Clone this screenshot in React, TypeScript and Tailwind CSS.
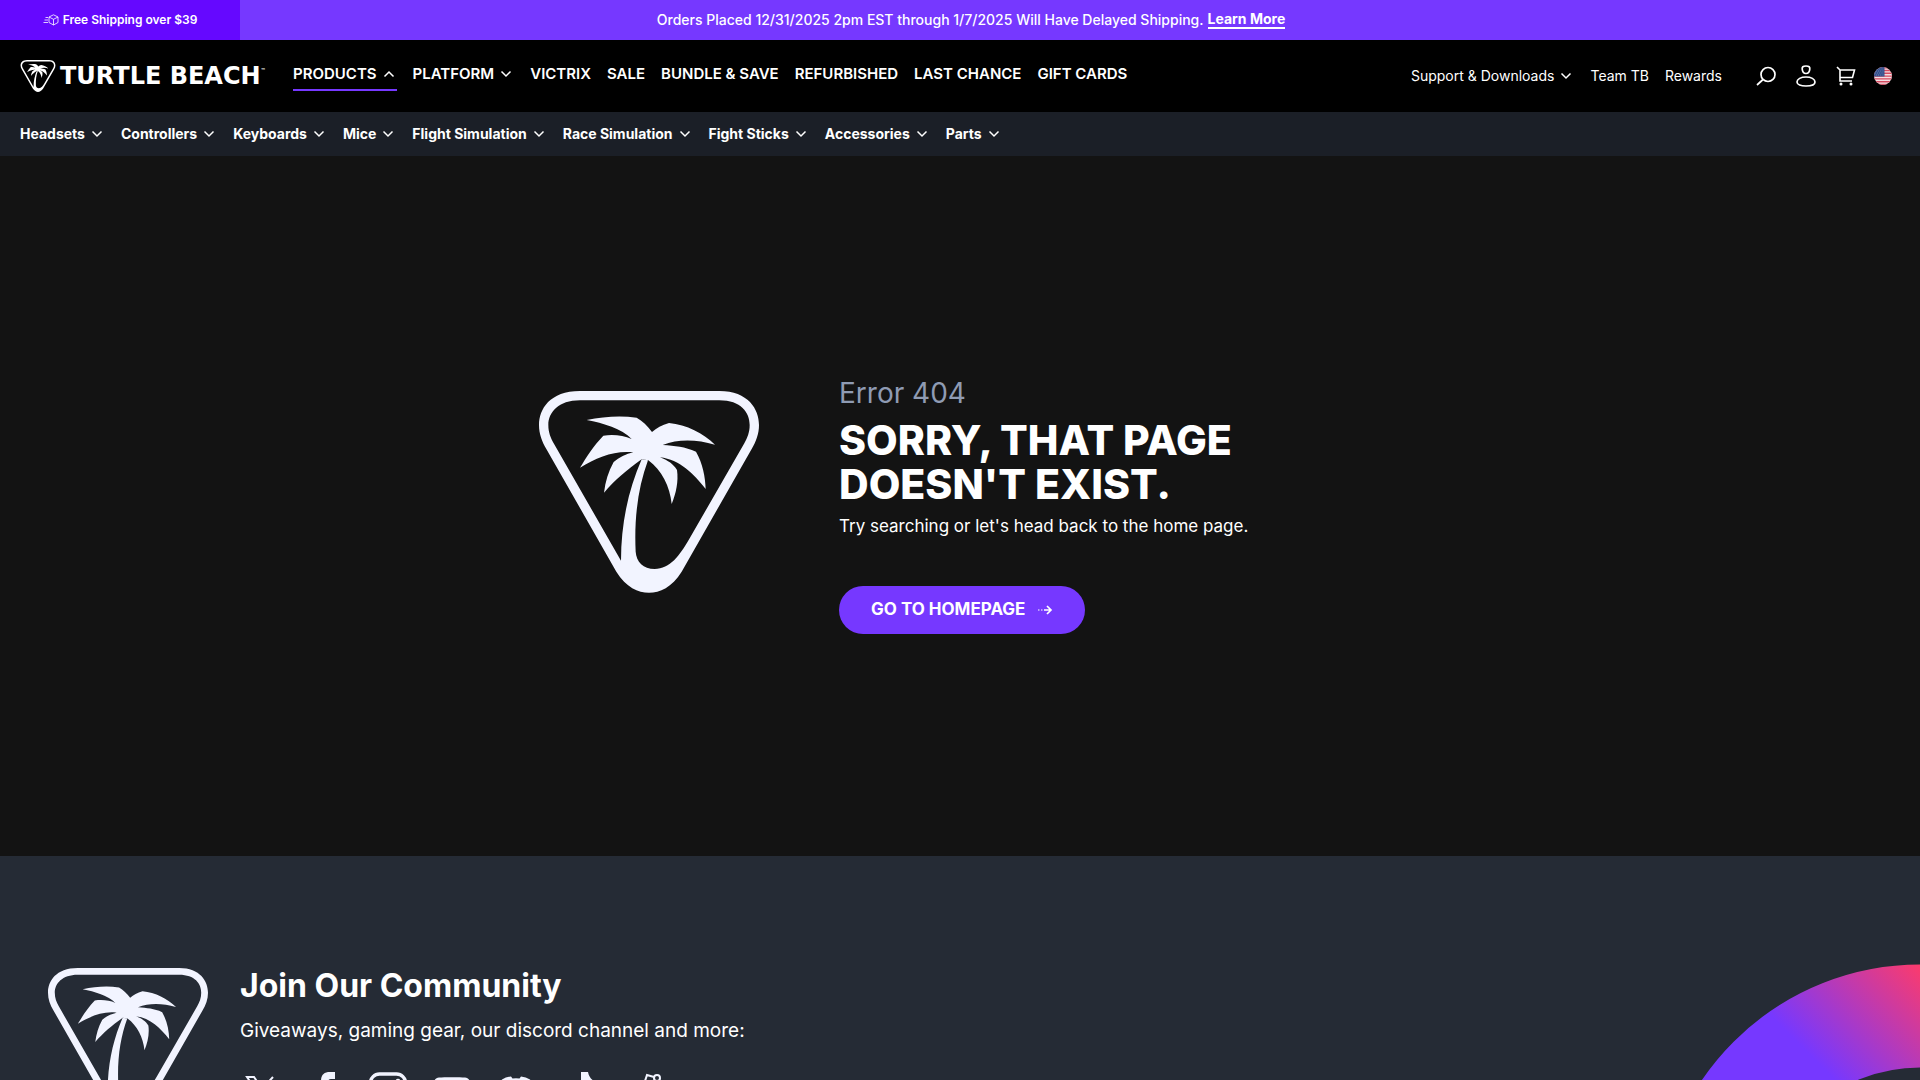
import { useState } from 'react';

interface NavItem {
  label: string;
  hasMenu?: boolean;
}

const mainNav: NavItem[] = [
  { label: 'PRODUCTS', hasMenu: true },
  { label: 'PLATFORM', hasMenu: true },
  { label: 'VICTRIX' },
  { label: 'SALE' },
  { label: 'BUNDLE & SAVE' },
  { label: 'REFURBISHED' },
  { label: 'LAST CHANCE' },
  { label: 'GIFT CARDS' },
];

const productNav = [
  'Headsets',
  'Controllers',
  'Keyboards',
  'Mice',
  'Flight Simulation',
  'Race Simulation',
  'Fight Sticks',
  'Accessories',
  'Parts',
];

function Chevron({ up = false }: { up?: boolean }) {
  return (
    <svg viewBox="0 0 16 16" className="w-4 h-4" fill="none" stroke="currentColor" strokeWidth="1.5">
      <path d={up ? 'M3.5 10.5L8 6l4.5 4.5' : 'M3.5 5.5L8 10l4.5-4.5'} />
    </svg>
  );
}

function PalmLogo({ className }: { className: string }) {
  return (
    <svg viewBox="57 63 660 606" className={className} fill="currentColor" aria-hidden="true">
      <path
        fillRule="evenodd"
        d="M180 63H598C685 63 717 118 717 165C717 192 708 215 695 237L485 605C455 652 420 668 387 668C354 668 319 652 289 605L79 237C66 215 57 192 57 165C57 118 89 63 180 63ZM180 91C115 91 85 128 85 165C85 187 92 204 101 220L303 572C303 460 325 360 365 268L384 271C355 350 342 440 347 545C349 575 370 597 404 597C450 597 480 555 506 510L673 220C682 204 689 187 689 165C689 128 663 91 598 91Z"
      />
      <path d="M200 150C250 140 300 136 350 143C367 152 383 168 396 186C410 175 425 165 447 159C500 164 550 190 585 224C530 208 475 206 428 225C465 228 495 230 528 245C548 280 556 320 557 357C520 310 480 270 420 262C445 272 460 282 471 300C476 335 468 370 455 402C450 350 425 300 385 271L365 268C320 300 285 330 252 368C256 335 265 305 281 276C297 262 318 252 340 247C285 240 230 262 180 293C200 260 220 228 250 197C280 193 310 196 335 207C305 175 250 160 200 150Z" />
    </svg>
  );
}

function BoxIcon() {
  return (
    <svg viewBox="0 0 16 12" className="w-4 h-3" fill="none" stroke="currentColor" strokeWidth="0.8">
      <path d="M10.500 .8L15 3v5.500L10.500 11L6 8.500V3ZM6 3l4.500 2.300L15 3M10.500 5.300V11M2.500 3.500H5M1.500 6H5M.5 8.500H5" />
    </svg>
  );
}

function FlagIcon() {
  return (
    <svg viewBox="0 0 18 18" className="w-[18px] h-[18px]">
      <clipPath id="flag-circle">
        <circle cx="9" cy="9" r="9" />
      </clipPath>
      <g clipPath="url(#flag-circle)">
        <path fill="#f4dfe3" d="M0 0h18v18H0z" />
        <path stroke="#d64a5f" strokeWidth="1.4" d="M0 .7h18M0 3.500h18M0 6.300h18M0 9.100h18M0 11.900h18M0 14.700h18M0 17.500h18" />
        <path fill="#34508c" d="M0 0h10.500v9.500H0z" />
        <path stroke="#8fa3cc" strokeWidth=".7" strokeDasharray=".8 1.400" d="M1 2h9M2 4h8M1 6h9M2 8h8" />
      </g>
    </svg>
  );
}

const socials = [
  {
    name: 'X',
    icon: <path fill="none" stroke="currentColor" strokeWidth="2" d="M7 5H14L33 33H26ZM33 5L22 17M18 21L7 33" />,
  },
  {
    name: 'Facebook',
    icon: <path d="M31 0V7H27C25 7 24 8 24 10V14H31L30 21H24V40H17V21H11V14H17V9C17 3 20 0 26 0Z" />,
  },
  {
    name: 'Instagram',
    icon: (
      <>
        <rect x="2.500" y="2" width="35" height="35" rx="9" fill="none" stroke="currentColor" strokeWidth="3.500" />
        <circle cx="20" cy="19.500" r="8" fill="none" stroke="currentColor" strokeWidth="3.500" />
        <circle cx="30" cy="9" r="2.300" />
      </>
    ),
  },
  {
    name: 'YouTube',
    icon: (
      <path
        fillRule="evenodd"
        d="M7 5.500C12 5 28 5 33 5.500C37 6 39 8 39 20C39 31 37 33 33 33.500C28 34 12 34 7 33.500C3 33 1 31 1 20C1 8 3 6 7 5.500ZM16 13.500V26L27 19.700Z"
      />
    ),
  },
  {
    name: 'Discord',
    icon: (
      <path
        fillRule="evenodd"
        d="M15 4.500L16.500 6.500Q20 6 23.500 6.500L25 4.500Q30 5 34 7.500Q40 17 39 29Q34 33 29 34L26.500 30.500Q20 32 13.500 30.500L11 34Q6 33 1 29Q0 17 6 7.500Q10 5 15 4.500ZM14 17a3.500 4 0 1 0 .1 0ZM26 17a3.500 4 0 1 0 .1 0Z"
      />
    ),
  },
  {
    name: 'TikTok',
    icon: <path d="M21 0H28C29 5 32 9 37 10V17Q32 17 28 14V27C28 45 4 44 4 28C4 20 10 15 18 16V23C14 22 11 24 11 28C12 35 21 34 21 27Z" />,
  },
  {
    name: 'Reddit',
    icon: (
      <g fill="none" stroke="currentColor" strokeWidth="2">
        <circle cx="33" cy="6" r="3" />
        <path d="M20 12L23 3L30 5" />
        <path d="M20 12C31 12 38 17 38 24S31 37 20 37S2 31 2 24S9 12 20 12Z" />
        <circle cx="14" cy="22" r="2" />
        <circle cx="26" cy="22" r="2" />
        <path d="M13 29Q20 34 27 29" />
      </g>
    ),
  },
];

export default function App() {
  const [openMenu, setOpenMenu] = useState('PRODUCTS');

  return (
    <div className="h-screen overflow-hidden flex flex-col bg-[#131313] text-white font-['Inter',sans-serif]">
      {/* Announcement bar */}
      <div className="flex shrink-0 h-10 bg-[#7638ff] font-semibold">
        <div className="w-60 flex items-center justify-center gap-1 bg-[#6508ff] text-xs">
          <BoxIcon />
          <span>Free Shipping over $39</span>
        </div>
        <p className="flex-1 flex items-center justify-center gap-1 pr-[218px] text-sm">
          <span className="font-medium">
            Orders Placed 12/31/2025 2pm EST through 1/7/2025 Will Have Delayed Shipping.
          </span>
          <a href="#" className="border-b-2 border-white leading-4 font-bold">Learn More</a>
        </p>
      </div>

      {/* Header */}
      <header className="flex shrink-0 items-center h-18 px-5 bg-black">
        <a href="#" className="flex items-center gap-1 w-[273px]" aria-label="Turtle Beach">
          <PalmLogo className="w-9 h-8" />
          <span className="flex whitespace-nowrap font-['DejaVu_Sans',sans-serif] font-bold text-2xl leading-6">
            TURTLE BEACH
            <span className="text-[5px] leading-3">™</span>
          </span>
        </a>
        <nav className="flex gap-4 pb-0.5 text-[15px] font-semibold">
          {mainNav.map((item) =>
            item.hasMenu ? (
              <button
                key={item.label}
                onClick={() => setOpenMenu(openMenu === item.label ? '' : item.label)}
                className={`flex items-center gap-1 h-8 border-b-2 ${
                  openMenu === item.label ? 'border-[#7638ff]' : 'border-transparent'
                }`}
              >
                {item.label}
                <Chevron up={openMenu === item.label} />
              </button>
            ) : (
              <a key={item.label} href="#" className="flex items-center h-8 border-b-2 border-transparent">
                {item.label}
              </a>
            )
          )}
        </nav>
        <div className="flex items-center gap-4 ml-auto text-sm">
          <button className="flex items-center gap-1">
            Support &amp; Downloads
            <Chevron />
          </button>
          <a href="#">Team TB</a>
          <a href="#">Rewards</a>
        </div>
        <div className="flex items-center gap-4 ml-8 pr-2">
          <button aria-label="Search">
            <svg viewBox="0 0 24 24" className="w-6 h-6" fill="none" stroke="currentColor" strokeWidth="1.7">
              <circle cx="14" cy="10.500" r="7" />
              <path d="M9 15.500L3 21" />
            </svg>
          </button>
          <button aria-label="Account">
            <svg viewBox="0 0 24 24" className="w-6 h-6" fill="none" stroke="currentColor" strokeWidth="1.7">
              <path d="M12 2C15 2 16 3 15.800 5C15.600 8 14.500 9.500 12 9.500S8.400 8 8.200 5C8 3 9 2 12 2Z" />
              <path d="M12 13C17 13 21 15 21 18C21 20.500 17 22 12 22S3 20.500 3 18C3 15 7 13 12 13Z" />
            </svg>
          </button>
          <button aria-label="Cart">
            <svg viewBox="0 0 24 24" className="w-6 h-6" fill="none" stroke="currentColor" strokeWidth="1.6">
              <path d="M3 3L6 6V17H18M6 6H20.500L18.500 13.500H6" />
              <circle cx="7" cy="20" r=".7" />
              <circle cx="17" cy="20" r=".7" />
            </svg>
          </button>
          <button aria-label="Country">
            <FlagIcon />
          </button>
        </div>
      </header>

      {/* Product sub navigation */}
      <nav className="flex shrink-0 items-center gap-4 h-11 px-5 bg-[#1b1f27] text-sm font-bold">
        {productNav.map((label) => (
          <button key={label} className="flex items-center gap-1">
            {label}
            <Chevron />
          </button>
        ))}
      </nav>

      {/* Error message */}
      <main className="flex shrink-0 h-[700px] justify-center gap-20 pt-[219px] pr-[42px]">
        <PalmLogo className="mt-4 w-[220px] h-[202px] text-[#f2f4ff]" />
        <div className="w-[500px]">
          <p className="text-[28px] leading-9 text-[#8f9bb3]">Error 404</p>
          <h1 className="mt-[7px] w-[440px] text-[41px] leading-11 font-extrabold">SORRY, THAT PAGE DOESN'T EXIST.</h1>
          <p className="mt-1.5 text-[17px] leading-7">Try searching or let's head back to the home page.</p>
          <a
            href="#"
            className="inline-flex items-center gap-3 mt-[46px] h-12 px-8 rounded-full bg-[#7638ff] text-[17px] font-bold"
          >
            GO TO HOMEPAGE
            <svg viewBox="0 0 16 16" className="w-4 h-4" fill="none" stroke="currentColor" strokeWidth="1.7">
              <path strokeDasharray="1.500 1.500" strokeWidth="1" d="M1 8h6" />
              <path d="M7 8h7M10 4l4 4l-4 4" />
            </svg>
          </a>
        </div>
      </main>

      {/* Community footer */}
      <footer className="relative flex flex-1 gap-8 px-12 pt-28 bg-[#252b35] overflow-hidden">
        <PalmLogo className="shrink-0 w-40 h-[147px] text-[#f2f4ff]" />
        <div>
          <h2 className="text-[32px] leading-9 font-bold">Join Our Community</h2>
          <p className="mt-3 text-[19px] leading-[30px]">Giveaways, gaming gear, our discord channel and more:</p>
          <div className="flex gap-6 mt-[26px] text-[#f2f4ff]">
            {socials.map((social) => (
              <a key={social.name} href="#" aria-label={social.name}>
                <svg viewBox="0 0 40 40" className="w-10 h-10" fill="currentColor">
                  {social.icon}
                </svg>
              </a>
            ))}
          </div>
        </div>
        <svg viewBox="0 0 264 528" className="absolute right-0 top-[108px] w-[264px] h-[528px]" fill="none">
          <defs>
            <linearGradient id="ring" gradientUnits="userSpaceOnUse" x1="119" y1="56" x2="218" y2="-43">
              <stop offset="0" stopColor="#7638ff" />
              <stop offset="1" stopColor="#fa3b6e" />
            </linearGradient>
          </defs>
          <circle cx="264" cy="264" r="212" stroke="url(#ring)" strokeWidth="103" />
        </svg>
      </footer>
    </div>
  );
}
